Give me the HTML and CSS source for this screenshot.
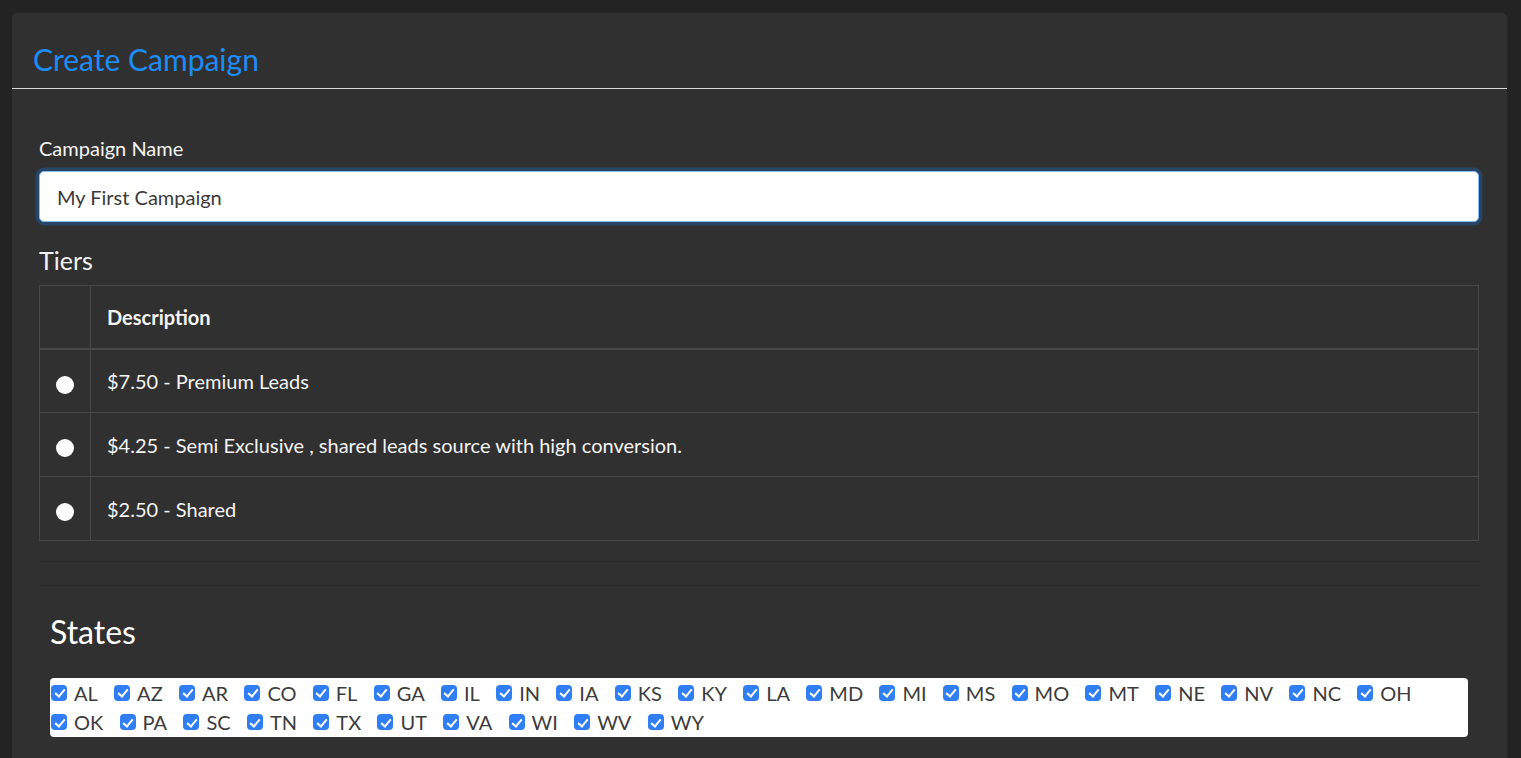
FILE: index.html
```html
<!DOCTYPE html>
<html lang="en">
<head>
<meta charset="utf-8">
<title>Create Campaign</title>
<link rel="stylesheet" href="styles.css">
</head>
<body>
<div class="card">
  <div class="card-header">
    <h1 class="title">Create Campaign</h1>
  </div>
  <div class="card-body">
    <label class="field-label" for="cname">Campaign Name</label>
    <input id="cname" class="text-input is-focused" type="text" value="My First Campaign">

    <h2 class="section-title">Tiers</h2>
    <table class="tiers">
      <thead>
        <tr><th class="sel"></th><th>Description</th></tr>
      </thead>
      <tbody>
        <tr><td class="sel"><input class="radio" type="radio" name="tier"></td><td>$7.50 - Premium Leads</td></tr>
        <tr><td class="sel"><input class="radio" type="radio" name="tier"></td><td>$4.25 - Semi Exclusive , shared leads source with high conversion.</td></tr>
        <tr><td class="sel"><input class="radio" type="radio" name="tier"></td><td>$2.50 - Shared</td></tr>
      </tbody>
    </table>

    <hr class="rule">
    <hr class="rule">

    <div class="states">
      <h2 class="states-title">States</h2>
      <div class="state-box">
        <label class="state"><input class="check" type="checkbox" checked>AL</label>
        <label class="state"><input class="check" type="checkbox" checked>AZ</label>
        <label class="state"><input class="check" type="checkbox" checked>AR</label>
        <label class="state"><input class="check" type="checkbox" checked>CO</label>
        <label class="state"><input class="check" type="checkbox" checked>FL</label>
        <label class="state"><input class="check" type="checkbox" checked>GA</label>
        <label class="state"><input class="check" type="checkbox" checked>IL</label>
        <label class="state"><input class="check" type="checkbox" checked>IN</label>
        <label class="state"><input class="check" type="checkbox" checked>IA</label>
        <label class="state"><input class="check" type="checkbox" checked>KS</label>
        <label class="state"><input class="check" type="checkbox" checked>KY</label>
        <label class="state"><input class="check" type="checkbox" checked>LA</label>
        <label class="state"><input class="check" type="checkbox" checked>MD</label>
        <label class="state"><input class="check" type="checkbox" checked>MI</label>
        <label class="state"><input class="check" type="checkbox" checked>MS</label>
        <label class="state"><input class="check" type="checkbox" checked>MO</label>
        <label class="state"><input class="check" type="checkbox" checked>MT</label>
        <label class="state"><input class="check" type="checkbox" checked>NE</label>
        <label class="state"><input class="check" type="checkbox" checked>NV</label>
        <label class="state"><input class="check" type="checkbox" checked>NC</label>
        <label class="state"><input class="check" type="checkbox" checked>OH</label>
        <label class="state"><input class="check" type="checkbox" checked>OK</label>
        <label class="state"><input class="check" type="checkbox" checked>PA</label>
        <label class="state"><input class="check" type="checkbox" checked>SC</label>
        <label class="state"><input class="check" type="checkbox" checked>TN</label>
        <label class="state"><input class="check" type="checkbox" checked>TX</label>
        <label class="state"><input class="check" type="checkbox" checked>UT</label>
        <label class="state"><input class="check" type="checkbox" checked>VA</label>
        <label class="state"><input class="check" type="checkbox" checked>WI</label>
        <label class="state"><input class="check" type="checkbox" checked>WV</label>
        <label class="state"><input class="check" type="checkbox" checked>WY</label>
      </div>
    </div>
  </div>
</div>
</body>
</html>
```
FILE: styles.css
```css
* { box-sizing: border-box; }

html, body {
  margin: 0;
  background: #232323;
  height: 100%;
  overflow: hidden;
}

body {
  padding: 13px 14px 0 12px;
  font-family: Lato, "Open Sans", sans-serif;
  color: #f4f4f4;
}

.card {
  background: #303030;
  border-radius: 5px 5px 0 0;
  min-height: 760px;
}

.card-header {
  height: 76px;
  padding: 0 21px;
  border-bottom: 1px solid #d8d8d8;
  display: flex;
  align-items: center;
}

.title {
  margin: 0;
  padding-top: 17px;
  font-size: 30px;
  font-weight: 400;
  color: #1e8cf6;
  line-height: 38px;
}

.card-body {
  padding: 47px 28px 0 27px;
}

.field-label {
  display: block;
  font-size: 20px;
  line-height: 24px;
  color: #f4f4f4;
  margin-bottom: 11px;
}

.text-input {
  display: block;
  width: 100%;
  height: 51px;
  padding: 0 17px;
  font-family: Lato, "Open Sans", sans-serif;
  font-size: 20px;
  color: #3a3a3a;
  background: #fff;
  border: 1px solid #80bdff;
  border-radius: 5px;
  outline: none;
}

.text-input.is-focused {
  box-shadow: 0 0 0 3.5px rgba(30, 110, 200, 0.35);
}

.section-title {
  margin: 23px 0 10px;
  font-size: 25px;
  font-weight: 400;
  line-height: 30px;
  color: #f4f4f4;
}

.tiers {
  width: 100%;
  border-collapse: collapse;
  border: 1px solid #474747;
  font-size: 20px;
}

.tiers th,
.tiers td {
  border: 1px solid #474747;
  height: 64px;
  padding: 0 16px;
  text-align: left;
  vertical-align: middle;
}

.tiers th {
  height: 63px;
  font-weight: 700;
  border-bottom: 2px solid #474747;
}

.tiers .sel {
  width: 51px;
  padding: 0;
  text-align: center;
}

.radio {
  appearance: none;
  -webkit-appearance: none;
  width: 18px;
  height: 18px;
  margin: 4px 0 0 0;
  border-radius: 50%;
  background: #fff;
  border: none;
  vertical-align: middle;
}

.rule {
  margin: 20px 0 0;
  border: 0;
  border-top: 1px solid #2a2a2a;
}

.rule + .rule {
  margin-top: 23px;
}

.states {
  padding: 0 11px;
}

.states-title {
  margin: 27px 0 27px;
  font-size: 32px;
  font-weight: 400;
  line-height: 38px;
  color: #fff;
}

.state-box {
  background: #fff;
  border-radius: 4px;
  display: flex;
  flex-wrap: wrap;
  padding: 0 0 0 1px;
}

.state {
  display: inline-flex;
  align-items: center;
  height: 29.5px;
  margin-right: 16.3px;
  font-size: 20px;
  color: #3c3c3c;
}

.check {
  appearance: none;
  -webkit-appearance: none;
  position: relative;
  width: 16px;
  height: 16px;
  margin: 0 7px 0 0;
  border-radius: 4px;
  background: #2f7ef6;
  flex: none;
}

.check::after {
  content: "";
  position: absolute;
  left: 5.5px;
  top: 2.5px;
  width: 4px;
  height: 8px;
  border-right: 2px solid #fff;
  border-bottom: 2px solid #fff;
  transform: rotate(40deg);
}
```
